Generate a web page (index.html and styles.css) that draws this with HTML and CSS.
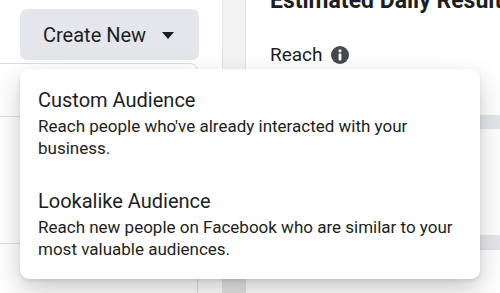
FILE: index.html
```html
<!DOCTYPE html>
<html>
<head>
<meta charset="utf-8">
<link rel="stylesheet" href="styles.css">
</head>
<body>
<div class="page">
  <div class="left">
    <button class="create-btn"><span>Create New</span><span class="caret"></span></button>
    <div class="card">
      <div class="card-row r1"></div>
      <div class="card-row r2"></div>
      <div class="card-row r3"></div>
    </div>
  </div>
  <div class="scrollbar"><div class="thumb"></div></div>
  <div class="right">
    <h2 class="results-title">Estimated Daily Results</h2>
    <div class="reach">Reach
      <svg class="info" width="18" height="18" viewBox="0 0 17 17"><circle cx="8.5" cy="8.5" r="8.5" fill="#444950"/><circle cx="8.5" cy="4.6" r="1.5" fill="#fff"/><rect x="7.2" y="7" width="2.6" height="6.6" rx="0.6" fill="#fff"/></svg>
    </div>
    <div class="skeleton s1"></div>
    <div class="skeleton s2"></div>
  </div>
  <div class="menu">
    <div class="menu-item">
      <div class="item-title">Custom Audience</div>
      <div class="item-desc">Reach people who've already interacted with your business.</div>
    </div>
    <div class="menu-item">
      <div class="item-title">Lookalike Audience</div>
      <div class="item-desc">Reach new people on Facebook who are similar to your most valuable audiences.</div>
    </div>
  </div>
</div>
</body>
</html>
```

FILE: styles.css
```css
* { box-sizing: border-box; }
html, body { margin: 0; padding: 0; }
body {
  width: 500px;
  height: 293px;
  overflow: hidden;
  background: #fff;
  font-family: Roboto, "Liberation Sans", sans-serif;
  color: #1c1e21;
}
.page {
  position: relative;
  display: flex;
  width: 500px;
  height: 293px;
  overflow: hidden;
}
.left {
  width: 222px;
  flex: none;
  padding-top: 9px;
  display: flex;
  flex-direction: column;
  background: #fff;
}
.create-btn {
  margin-left: 20px;
  width: 179px;
  height: 51px;
  border: none;
  border-radius: 7px;
  background: #e4e6eb;
  display: flex;
  align-items: center;
  padding: 0 0 0 23px;
  font-family: inherit;
  font-size: 20px;
  line-height: 24px;
  color: #1c1e21;
  gap: 16px;
}
.caret {
  width: 0;
  height: 0;
  border-left: 6.5px solid transparent;
  border-right: 6.5px solid transparent;
  border-top: 7px solid #1c1e21;
  margin-top: 1px;
}
.card {
  margin-top: 3px;
  margin-left: -10px;
  width: 208px;
  border: 1px solid #dadde1;
  border-radius: 8px;
  flex: 1;
  margin-bottom: -20px;
}
.card-row { border-bottom: 1px solid #dadde1; }
.r1 { height: 53px; }
.r2 { height: 127px; }
.r3 { border-bottom: none; }
.scrollbar {
  width: 24px;
  flex: none;
  background: #f3f3f3;
  border-left: 1px solid #e4e4e4;
  border-right: 1px solid #e4e4e4;
  display: flex;
  flex-direction: column;
  justify-content: flex-end;
}
.thumb {
  height: 14px;
  background: #e6e6e6;
}
.right {
  flex: 1;
  padding-left: 24px;
  background: #fff;
}
.results-title {
  margin: -13px 0 0 0;
  font-size: 23px;
  line-height: 28px;
  font-weight: 700;
  white-space: nowrap;
  color: #1c1e21;
}
.reach {
  margin-top: 28px;
  font-size: 19px;
  line-height: 24px;
  display: flex;
  align-items: center;
  gap: 8px;
}
.info { display: block; }
.skeleton {
  height: 14px;
  background: #e4e6eb;
  border-radius: 2px;
  margin-right: -10px;
}
.s1 { margin-top: 48px; }
.s2 { margin-top: 106px; height: 15px; }
.menu {
  position: absolute;
  left: 20px;
  top: 69px;
  width: 460px;
  padding: 8px 0;
  background: #fff;
  border-radius: 9px;
  box-shadow: 0 12px 28px 0 rgba(0,0,0,0.2), 0 2px 4px 0 rgba(0,0,0,0.1);
  display: flex;
  flex-direction: column;
  gap: 8px;
}
.menu-item {
  padding: 11px 8px 11px 18px;
}
.item-title {
  font-size: 20px;
  line-height: 24px;
  color: #1c1e21;
}
.item-desc {
  margin-top: 3px;
  font-size: 17px;
  line-height: 22px;
  color: #1c1e21;
}
```
